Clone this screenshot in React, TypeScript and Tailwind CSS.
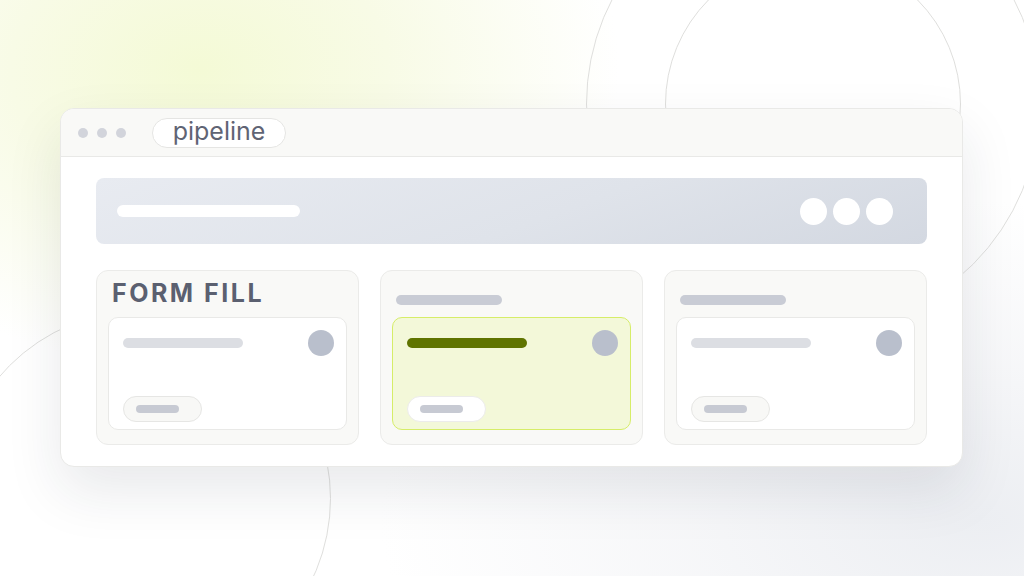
const Bar = ({ className }: { className: string }) => (
  <div className={`rounded-full ${className}`} />
);

function TaskCard({ active = false }: { active?: boolean }) {
  return (
    <div
      className={`flex h-[113px] flex-col justify-between rounded-[10px] border pb-[7px] pl-[14px] pr-[12px] pt-3 ${
        active ? "border-[#d6ed68] bg-[#f3f8d9]" : "border-[#e9e9e7] bg-white"
      }`}
    >
      <div className="flex items-center justify-between">
        <Bar className={`h-[10px] w-[120px] ${active ? "bg-[#5f7400]" : "bg-[#dcdee3]"}`} />
        <div className="size-[26px] rounded-full bg-[#b9bfcc]" />
      </div>
      <div
        className={`flex h-[26px] w-[79px] items-center rounded-full border pl-3 ${
          active ? "border-[#ececea] bg-white" : "border-[#e6e6e4] bg-[#f8f8f6]"
        }`}
      >
        <Bar className="h-[8px] w-[43px] bg-[#c7cad3]" />
      </div>
    </div>
  );
}

function Column({ title, active }: { title?: string; active?: boolean }) {
  return (
    <div className="flex flex-col rounded-xl border border-[#ebebe9] bg-[#f9f9f7] px-[11px] pb-[14px] pt-3">
      <div className="flex h-[34px] items-center px-[4px]">
        {title ? (
          <span className="mt-[-13px] text-[25px] font-bold leading-none tracking-[0.1em] text-[#5b6070]">
            {title}
          </span>
        ) : (
          <Bar className="h-[10px] w-[106px] bg-[#c9ccd5]" />
        )}
      </div>
      <TaskCard active={active} />
    </div>
  );
}

export default function App() {
  return (
    <div
      className="relative h-[576px] w-[1024px] overflow-hidden bg-white"
      style={{ fontFamily: "Inter, 'Liberation Sans', sans-serif" }}
    >
      {/* soft background glows */}
      <div className="absolute inset-0 bg-[radial-gradient(ellipse_420px_300px_at_200px_70px,#f4fad6_0%,#f8fbe6_45%,rgba(255,255,255,0)_100%)]" />
      <div className="absolute inset-0 bg-[radial-gradient(ellipse_600px_320px_at_980px_520px,#eceef2_0%,rgba(241,242,245,0.6)_50%,rgba(255,255,255,0)_100%)]" />

      {/* decorative rings */}
      <div className="absolute left-[586px] top-[-123px] size-[454px] rounded-full border-[1.5px] border-[#dfdfdd]" />
      <div className="absolute left-[665px] top-[-44px] size-[296px] rounded-full border-[1.5px] border-[#dfdfdd]" />
      <div className="absolute left-[-46px] top-[310px] size-[377px] rounded-full border-[1.5px] border-[#dfdfdd]" />

      {/* browser window */}
      <div className="absolute left-[60px] top-[108px] flex h-[359px] w-[903px] flex-col overflow-hidden rounded-[14px] border border-[#e9e9e7] bg-white shadow-[0_24px_56px_rgba(30,40,60,0.10)]">
        <div className="flex h-[48px] shrink-0 items-center border-b border-[#e9e9e7] bg-[#f9f9f7] pl-[17px]">
          <div className="flex gap-[9px]">
            <div className="size-[10px] rounded-full bg-[#d2d4db]" />
            <div className="size-[10px] rounded-full bg-[#d2d4db]" />
            <div className="size-[10px] rounded-full bg-[#d2d4db]" />
          </div>
          <div className="ml-[26px] flex h-[30px] w-[134px] items-center justify-center rounded-full border border-[#e5e5e3] bg-white">
            <span className="mt-[-2px] text-[25px] leading-none text-[#5f6474]">pipeline</span>
          </div>
        </div>

        <div className="flex flex-col gap-[26px] px-[35px] pt-[21px]">
          <div className="flex h-[66px] items-center justify-between rounded-lg bg-[linear-gradient(160deg,#e8ebf1_0%,#dfe3ea_55%,#d3d8e1_100%)] pl-[21px] pr-[34px]">
            <Bar className="h-[12px] w-[183px] bg-white" />
            <div className="flex gap-[6px]">
              <div className="size-[27px] rounded-full bg-white" />
              <div className="size-[27px] rounded-full bg-white" />
              <div className="size-[27px] rounded-full bg-white" />
            </div>
          </div>

          <div className="grid grid-cols-3 gap-[21px]">
            <Column title="FORM FILL" />
            <Column active />
            <Column />
          </div>
        </div>
      </div>
    </div>
  );
}
